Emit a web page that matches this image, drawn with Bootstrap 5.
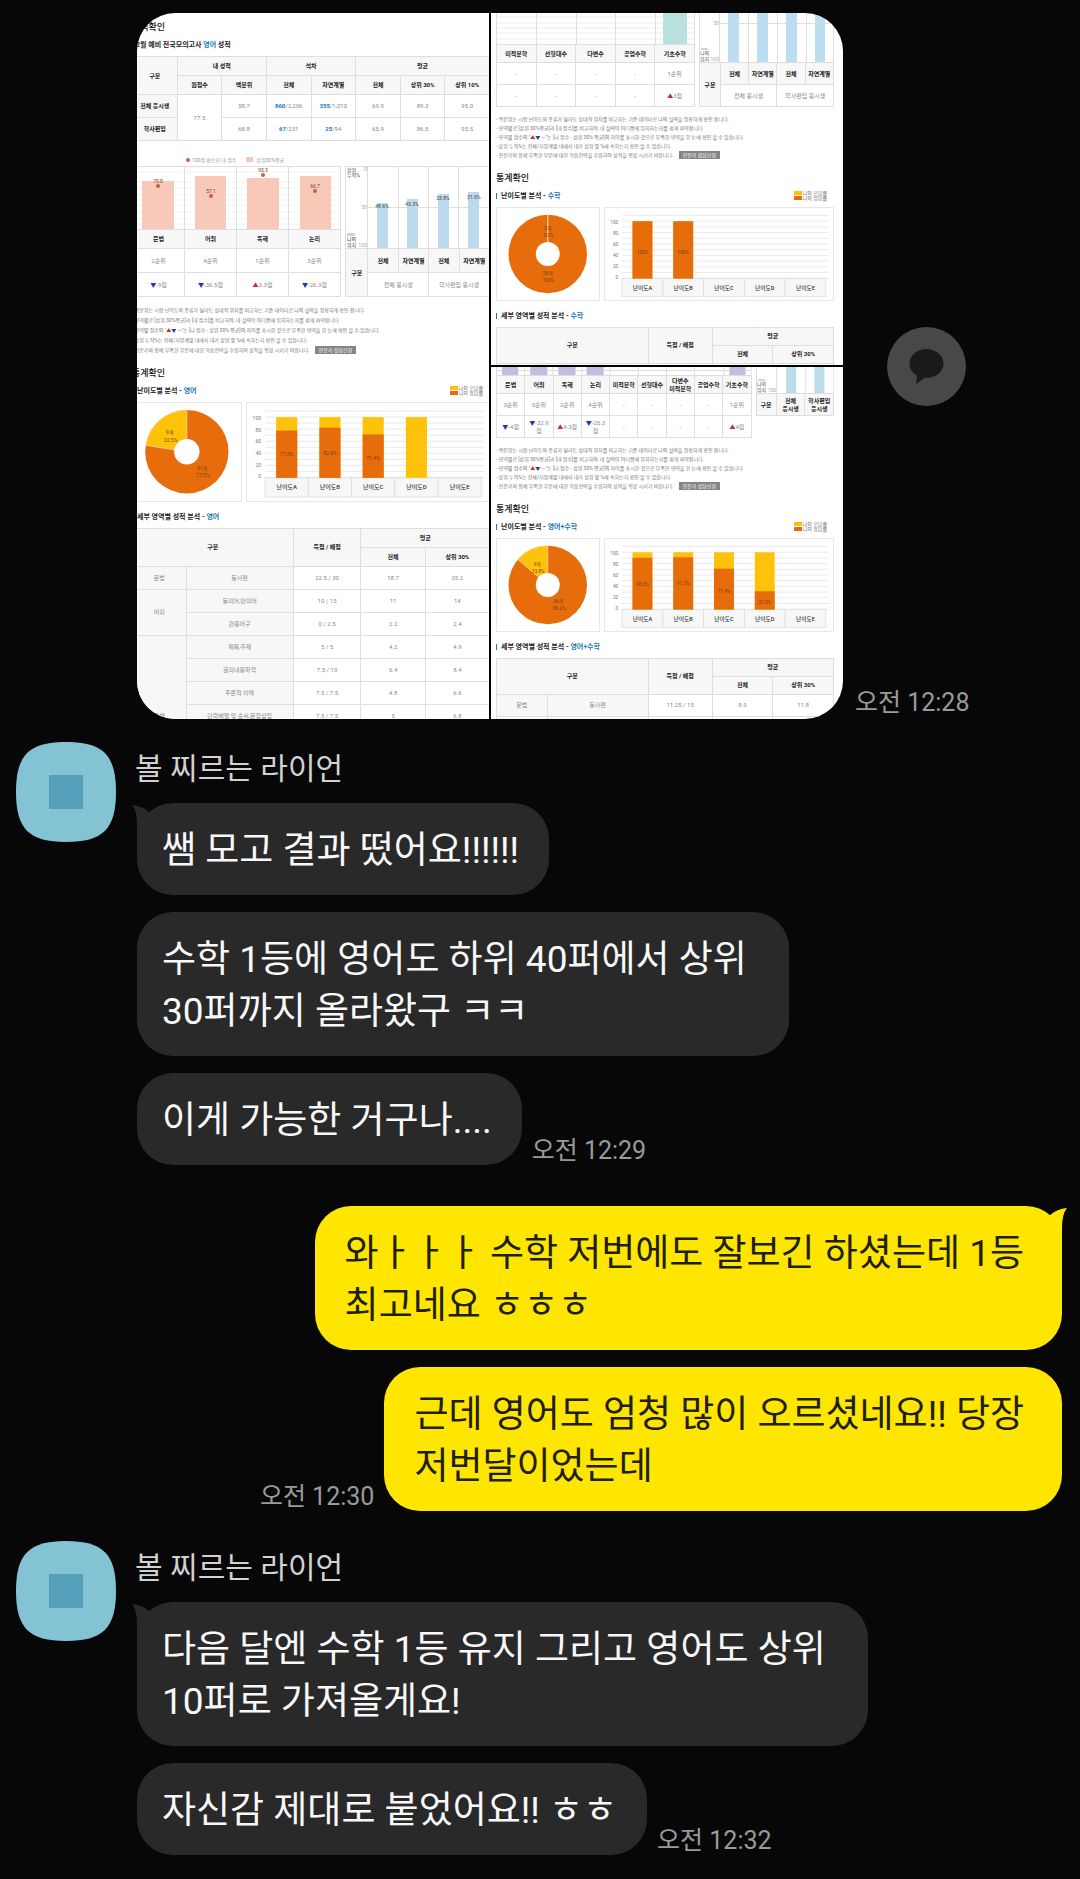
<!DOCTYPE html>
<html lang="ko">
<head>
<meta charset="utf-8">
<meta name="viewport" content="width=device-width, initial-scale=1">
<title>채팅</title>
<link rel="stylesheet" href="https://cdn.jsdelivr.net/npm/bootstrap@5.3.0/dist/css/bootstrap.min.css">
<style>
  body { background: #070707; font-family: Roboto, "Noto Sans CJK KR", sans-serif; }
  .chat { padding: 13px 18px 24px 16px; }
  .indent { margin-left: 121px; }

  /* messages */
  .group { gap: 21px; margin-top: 23px; }
  .group.next { margin-top: 30px; }
  .stack { gap: 17px; }
  .mine { margin-top: 41px; gap: 17px; }
  .avatar { width: 100px; height: 100px; }
  .sender { font-size: 30px; line-height: 34px; color: #d2d2d2; margin: 10px 0 17px -2px; font-weight: 400; }
  .bubble { position: relative; background: #292929; color: #f8f8f8; border-radius: 36px; padding: 22px 30px 18px 25px; font-size: 37px; line-height: 52px; margin: 0; }
  .bubble.wrapped { padding-right: 42px; }
  .mine .bubble { background: #ffe600; color: #211e08; padding-left: 30px; padding-right: 38px; }
  .tail { position: absolute; left: -6px; top: 0; width: 36px; height: 36px; fill: #292929; }
  .mine .tail { left: auto; right: -6px; fill: #ffe600; }
  .stamp { font-size: 25px; line-height: 28px; color: #9a9a9a; white-space: nowrap; }
  .gap-stamp { gap: 10px; }

  /* photo collage */
  .collage { flex: 0 1 706px; aspect-ratio: 1; display: grid; grid-template: 1fr 1fr / 1fr 1fr; gap: 2px; border-radius: 38px; overflow: hidden; background: #000; }
  .tile { background: #fff; overflow: hidden; min-height: 0; min-width: 0; color: #222; }
  .tile-tall { grid-row: 1 / 3; }
  .side { padding: 30px 0 2px 12px; }
  .share { width: 79px; height: 79px; border-radius: 50%; border: 0; padding: 0; background: #484848; margin-left: 32px; }

  /* score report pages */
  .sheet { margin: 0 9px 0 5px; font-size: 6px; line-height: 8px; }
  .tile-tall .sheet { margin: 8px -1px 0 -5px; }
  .sheet h2 { font-size: 9px; line-height: 12px; font-weight: 500; margin: 12px 0 7px; color: #111; }
  .tile-tall .sheet h2:first-child { margin-top: 0; }
  .sheet h3 { font-size: 7px; line-height: 10px; font-weight: 700; margin: 0; color: #222; }
  .sheet h3 span { color: #1878b4; }
  .tick { padding-left: 5px; background: linear-gradient(#1878b4, #1878b4) 0 50% / 1px 6px no-repeat; }
  .sheet .sub { margin-bottom: 6px; }
  .sheet .sub-after { margin-top: 10px; }
  .rpt { width: 100%; table-layout: fixed; border-collapse: collapse; text-align: center; vertical-align: middle; color: #8a8a8a; }
  .rpt th, .rpt td { border: 1px solid #dedede; padding: 0; height: 22px; vertical-align: middle; }
  .rpt th { background: #f7f7f7; color: #222; font-weight: 700; }
  .rpt .h-row th { height: 18px; }
  .rpt .soft { background: #f7f7f7; color: #8a8a8a; font-weight: 400; }
  .tile-tall .rpt td, .tile-tall .rpt tbody th { height: 23px; }
  .tile-tall .rpt .h-row th { height: 19px; }
  .tile-tall .pair td, .tile-tall .pair tr:not(.h-row) th { height: 24px; }
  .rpt b { color: #1878c4; }
  .pair { gap: 4px; }
  .pair svg, .stats svg { display: block; width: 100%; height: auto; }
  .w-main { flex: 209 209 0; min-width: 0; }
  .w-side { flex: 145 145 0; min-width: 0; }
  .tile-b .w-main { flex-grow: 199; }
  .tile-b .w-side { flex-grow: 135; }
  .tile-c .w-main { flex-grow: 254; }
  .tile-c .w-side { flex-grow: 78; }
  .up { color: #c0303c; }
  .dn { color: #2038b0; }
  .notes { list-style: none; margin: 8px 0 0; padding: 0; font-size: 5px; line-height: 9px; color: #777; white-space: nowrap; }
  .tile-tall .notes { line-height: 10px; }
  .notes button { font-size: 5px; line-height: 8px; background: #858585; color: #fff; border: 0; padding: 0 4px; margin-left: 4px; }
  .legend { font-size: 5px; line-height: 10px; color: #999; gap: 10px; margin: 14px 0 1px 54px; }
  .key { display: inline-block; width: 7px; height: 5px; background: #f8c8b8; margin-right: 3px; }
  .key.pt { width: 4px; height: 4px; border-radius: 50%; background: #d0603c; margin-right: 2px; }
  .rate { font-size: 5px; line-height: 5px; color: #777; padding-right: 7px; }
  .rate i { display: inline-block; width: 8px; height: 4px; margin-right: 1px; background: #ffc20a; vertical-align: top; }
  .rate i.ok { background: #e66c0c; }
  .stats { gap: 4px; }
  .stats > div { border: 1px solid #e6e6e6; min-width: 0; }
  .box-pie { flex: 108 108 0; }
  .box-bar { flex: 243 243 0; }
  svg text { font-family: Roboto, "Noto Sans CJK KR", sans-serif; }
</style>
</head>
<body>
<main class="chat d-flex flex-column">

  <section class="indent d-flex">
    <div class="collage">

      <article class="tile tile-tall">
        <div class="sheet">
          <h2>성적확인</h2>
          <h3 class="sub">12월 예비 전국모의고사 <span>영어</span> 성적</h3>
          <table class="rpt">
            <thead>
              <tr class="h-row"><th rowspan="2">구분</th><th colspan="2">내 성적</th><th colspan="2">석차</th><th colspan="3">평균</th></tr>
              <tr class="h-row"><th>원점수</th><th>백분위</th><th>전체</th><th>자연계열</th><th>전체</th><th>상위 30%</th><th>상위 10%</th></tr>
            </thead>
            <tbody>
              <tr><th>전체 응시생</th><td rowspan="2">77.5</td><td>58.7</td><td><b>860</b>/2,206</td><td><b>355</b>/1,010</td><td>69.9</td><td>89.3</td><td>95.0</td></tr>
              <tr><th>학사편입</th><td>68.8</td><td><b>67</b>/231</td><td><b>25</b>/94</td><td>65.9</td><td>86.5</td><td>93.5</td></tr>
            </tbody>
          </table>
          <div class="legend d-flex">
            <span><i class="key pt"></i>100점 환산한 내 점수</span><span><i class="key"></i>상위30%평균</span>
          </div>
          <div class="pair d-flex">
            <div class="w-main">
              <svg viewBox="0 0 209 63" role="img" aria-label="영역별 점수">
                <path d="M0 6H209M0 16H209M0 22H209M0 28H209M0 34H209M0 40H209M0 46H209M0 52H209M0 58H209" stroke="#eee" stroke-width=".7"/>
                <path d="M0 .5H208.500V63M52.500 0V63M104.500 0V63M156.500 0V63" fill="none" stroke="#dedede"/>
                <path d="M10 15h32v48h-32zM63 10h31v53h-31zM115 12h32v51h-32zM168 10h31v53h-31z" fill="#f8c8b8"/>
                <g fill="#c8603c"><circle cx="26" cy="20" r="2"/><circle cx="79" cy="30" r="2"/><circle cx="131" cy="9" r="2"/><circle cx="183" cy="25" r="2"/></g>
                <g font-size="5" fill="#7a3a2a" text-anchor="middle"><text x="26" y="17">75.0</text><text x="79" y="27">57.1</text><text x="131" y="6">93.3</text><text x="183" y="22">66.7</text></g>
              </svg>
              <table class="rpt">
                <tr class="h-row"><th>문법</th><th>어휘</th><th>독해</th><th>논리</th></tr>
                <tr><td>2순위</td><td>4순위</td><td>1순위</td><td>3순위</td></tr>
                <tr><td><span class="dn">▼</span>-9점</td><td><span class="dn">▼</span>-36.5점</td><td><span class="up">▲</span>3.3점</td><td><span class="dn">▼</span>-26.3점</td></tr>
              </table>
            </div>
            <div class="w-side">
              <svg viewBox="0 0 145 82" role="img" aria-label="상위 누적 비율">
                <path d="M.5 82V.5H145M22.500 0V82M53.500 0V82M83.500 0V82M113.500 0V82M22 41.500H145" fill="none" stroke="#dedede"/>
                <path d="M32 37h11v45h-11zM62 33h11v49h-11zM93 28h11v54h-11zM123 26h11v56h-11zM2 67h8v3h-8z" fill="#bcdaec"/>
                <g font-size="5" fill="#444"><g text-anchor="middle"><text x="37" y="42">48.6%</text><text x="67" y="40">43.3%</text><text x="98" y="34">33.8%</text><text x="129" y="33">31.0%</text></g><text x="2" y="6">상위</text><text x="2" y="11">누적%</text><text x="2" y="75">나의</text><text x="2" y="81">위치</text></g>
                <g font-size="5" fill="#aaa" text-anchor="end"><text x="22" y="5">0</text><text x="22" y="43">50</text><text x="22" y="81">100</text></g>
              </svg>
              <table class="rpt">
                <colgroup><col style="width:15.500%"><col span="4"></colgroup>
                <tr><th rowspan="2">구분</th><th>전체</th><th>자연계열</th><th>전체</th><th>자연계열</th></tr>
                <tr><td colspan="2">전체 응시생</td><td colspan="2">학사편입 응시생</td></tr>
              </table>
            </div>
          </div>
          <ul class="notes">
            <li>- 백분위는 시험 난이도와 종류가 달라도 상대적 위치를 비교하는 기준 데이터로 나의 실력을 정확하게 확인 합니다.</li>
            <li>- 영역별로 [상위 30%평균]과 [내 점수]를 비교하여, 내 실력이 어디쯤에 위치하는지를 쉽게 파악합니다.</li>
            <li>- 영역별 점수의 "<span class="up">▲</span><span class="dn">▼</span> —"는 [나 점수 - 상위 30% 평균]의 차이를 표시한 것으로 부족한 영역을 한 눈에 확인 할 수 있습니다.</li>
            <li>- 상위 누적%는 전체/지망계열 내에서 내가 상위 몇 %에 속하는지 확인 할 수 있습니다.</li>
            <li>- 전문가와 함께 부족한 부분에 대한 학습전략을 수립하여 성적을 향상 시키기 바랍니다. <button type="button">전문가 상담신청</button></li>
          </ul>
          <h2>통계확인</h2>
          <div class="sub d-flex justify-content-between"><h3 class="tick">난이도별 분석 - <span>영어</span></h3><div class="rate"><div><i></i>나의 오답률</div><div><i class="ok"></i>나의 정답률</div></div></div>
          <div class="stats d-flex" data-wrong="22.5" data-labels="9개 22.5%|31개 77.5%" data-bars="77.8,82.6,71.4,0"></div>
          <h3 class="tick sub sub-after">세부 영역별 성적 분석 - <span>영어</span></h3>
          <table class="rpt">
            <colgroup><col style="width:15%"><col style="width:30%"><col style="width:19%"><col style="width:18%"><col></colgroup>
            <thead>
              <tr class="h-row"><th colspan="2" rowspan="2">구분</th><th rowspan="2">득점 / 배점</th><th colspan="2">평균</th></tr>
              <tr class="h-row"><th>전체</th><th>상위 30%</th></tr>
            </thead>
            <tbody>
              <tr><td class="soft">문법</td><td class="soft">동사편</td><td>22.5 / 30</td><td>18.7</td><td>25.2</td></tr>
              <tr><td class="soft" rowspan="2">어휘</td><td class="soft">동의어,반의어</td><td>10 / 15</td><td>11</td><td>14</td></tr>
              <tr><td class="soft">관용어구</td><td>0 / 2.5</td><td>2.2</td><td>2.4</td></tr>
              <tr><td class="soft" rowspan="7">독해</td><td class="soft">제목,주제</td><td>5 / 5</td><td>4.2</td><td>4.9</td></tr>
              <tr><td class="soft">글의내용파악</td><td>7.5 / 10</td><td>6.4</td><td>8.4</td></tr>
              <tr><td class="soft">추론적 이해</td><td>7.5 / 7.5</td><td>4.8</td><td>6.6</td></tr>
              <tr><td class="soft">단락배열 및 순서,문장삽입</td><td>7.5 / 7.5</td><td>5</td><td>6.8</td></tr>
              <tr><td class="soft"></td><td></td><td></td><td></td></tr>
              <tr><td class="soft"></td><td></td><td></td><td></td></tr>
              <tr><td class="soft"></td><td></td><td></td><td></td></tr>
            </tbody>
          </table>
        </div>
      </article>

      <article class="tile tile-b">
        <div class="sheet">
          <div class="pair d-flex">
            <div class="w-main">
              <svg viewBox="0 0 199 31" role="img" aria-label="영역별 점수">
                <path d="M0 4H199M0 10H199M0 15H199M0 20H199M0 26H199" stroke="#e6e6e6" stroke-width=".8"/>
                <path d="M.5 0V31M40.500 0V31M80.500 0V31M119.500 0V31M159.500 0V31M198.500 0V31" stroke="#dedede"/>
                <path d="M167 0h24v31h-24z" fill="#b8e0dc"/>
              </svg>
              <table class="rpt">
                <tr class="h-row"><th>미적분학</th><th>선형대수</th><th>다변수</th><th>공업수학</th><th>기초수학</th></tr>
                <tr><td>-</td><td>-</td><td>-</td><td>-</td><td>1순위</td></tr>
                <tr><td>-</td><td>-</td><td>-</td><td>-</td><td><span class="up">▲</span>3점</td></tr>
              </table>
            </div>
            <div class="w-side">
              <svg viewBox="0 0 135 49" role="img" aria-label="상위 누적 비율">
                <path d="M.5 0V49M20.500 0V49M49.500 0V49M78.500 0V49M107.500 0V49M134.500 0V49M20 10.500H135" stroke="#dedede"/>
                <path d="M29 0h11v49h-11zM58 0h11v49h-11zM87 0h11v49h-11zM116 0h10v49h-10zM2 35h7v2h-7z" fill="#bcdcf0"/>
                <g font-size="5" fill="#555"><text x="1" y="42">나의</text><text x="1" y="48">위치</text></g>
                <g font-size="5" fill="#aaa" text-anchor="end"><text x="20" y="12">50</text><text x="20" y="48">100</text></g>
              </svg>
              <table class="rpt">
                <colgroup><col style="width:15.500%"><col span="4"></colgroup>
                <tr><th rowspan="2">구분</th><th>전체</th><th>자연계열</th><th>전체</th><th>자연계열</th></tr>
                <tr><td colspan="2">전체 응시생</td><td colspan="2">학사편입 응시생</td></tr>
              </table>
            </div>
          </div>
          <ul class="notes">
            <li>- 백분위는 시험 난이도와 종류가 달라도 상대적 위치를 비교하는 기준 데이터로 나의 실력을 정확하게 확인 합니다.</li>
            <li>- 영역별로 [상위 30%평균]과 [내 점수]를 비교하여, 내 실력이 어디쯤에 위치하는지를 쉽게 파악합니다.</li>
            <li>- 영역별 점수의 "<span class="up">▲</span><span class="dn">▼</span> —"는 [나 점수 - 상위 30% 평균]의 차이를 표시한 것으로 부족한 영역을 한 눈에 확인 할 수 있습니다.</li>
            <li>- 상위 누적%는 전체/지망계열 내에서 내가 상위 몇 %에 속하는지 확인 할 수 있습니다.</li>
            <li>- 전문가와 함께 부족한 부분에 대한 학습전략을 수립하여 성적을 향상 시키기 바랍니다. <button type="button">전문가 상담신청</button></li>
          </ul>
          <h2>통계확인</h2>
          <div class="sub d-flex justify-content-between"><h3 class="tick">난이도별 분석 - <span>수학</span></h3><div class="rate"><div><i></i>나의 오답률</div><div><i class="ok"></i>나의 정답률</div></div></div>
          <div class="stats d-flex" data-wrong="0" data-labels="0개 0.0%|28개 100%" data-bars="100,100"></div>
          <h3 class="tick sub sub-after">세부 영역별 성적 분석 - <span>수학</span></h3>
          <table class="rpt">
            <colgroup><col style="width:15%"><col style="width:30%"><col style="width:19%"><col style="width:18%"><col></colgroup>
            <tr class="h-row"><th colspan="2" rowspan="2">구분</th><th rowspan="2">득점 / 배점</th><th colspan="2">평균</th></tr>
            <tr class="h-row"><th>전체</th><th>상위 30%</th></tr>
            <tr><td class="soft"></td><td class="soft"></td><td></td><td></td><td></td></tr>
          </table>
        </div>
      </article>

      <article class="tile tile-c">
        <div class="sheet">
          <div class="pair d-flex align-items-start">
            <div class="w-main">
              <svg viewBox="0 0 254 8" role="img" aria-label="영역별 점수">
                <path d="M.5 0V8M28.500 0V8M56.500 0V8M85.500 0V8M113.500 0V8M141.500 0V8M169.500 0V8M197.500 0V8M226.500 0V8M253.500 0V8M0 3.500H254" stroke="#dedede"/>
                <path d="M6 0h16v8h-16zM34 0h17v8h-17zM62 0h17v8h-17zM90 0h17v8h-17zM232 0h16v8h-16z" fill="#c5bbdf"/>
              </svg>
              <table class="rpt">
                <tr class="h-row"><th>문법</th><th>어휘</th><th>독해</th><th>논리</th><th>미적분학</th><th>선형대수</th><th>다변수<br>미적분학</th><th>공업수학</th><th>기초수학</th></tr>
                <tr><td>3순위</td><td>5순위</td><td>2순위</td><td>4순위</td><td>-</td><td>-</td><td>-</td><td>-</td><td>1순위</td></tr>
                <tr><td><span class="dn">▼</span>-4점</td><td><span class="dn">▼</span>-32.9<br>점</td><td><span class="up">▲</span>4.3점</td><td><span class="dn">▼</span>-25.3<br>점</td><td>-</td><td>-</td><td>-</td><td>-</td><td><span class="up">▲</span>4점</td></tr>
              </table>
            </div>
            <div class="w-side">
              <svg viewBox="0 0 78 26" role="img" aria-label="상위 누적 비율">
                <path d="M.5 0V26M20.500 0V26M49.500 0V26M77.500 0V26" stroke="#dedede"/>
                <path d="M30 0h10v26h-10zM58 0h10v26h-10zM2 12h7v2h-7z" fill="#bcdcec"/>
                <g font-size="5" fill="#555"><text x="1" y="19">나의</text><text x="1" y="25">위치</text><text x="20" y="25" text-anchor="end" fill="#aaa">100</text></g>
              </svg>
              <table class="rpt">
                <colgroup><col style="width:26%"><col span="2"></colgroup>
                <tr><th>구분</th><th>전체<br>응시생</th><th>학사편입<br>응시생</th></tr>
              </table>
            </div>
          </div>
          <ul class="notes">
            <li>- 백분위는 시험 난이도와 종류가 달라도 상대적 위치를 비교하는 기준 데이터로 나의 실력을 정확하게 확인 합니다.</li>
            <li>- 영역별로 [상위 30%평균]과 [내 점수]를 비교하여, 내 실력이 어디쯤에 위치하는지를 쉽게 파악합니다.</li>
            <li>- 영역별 점수의 "<span class="up">▲</span><span class="dn">▼</span> —"는 [나 점수 - 상위 30% 평균]의 차이를 표시한 것으로 부족한 영역을 한 눈에 확인 할 수 있습니다.</li>
            <li>- 상위 누적%는 전체/지망계열 내에서 내가 상위 몇 %에 속하는지 확인 할 수 있습니다.</li>
            <li>- 전문가와 함께 부족한 부분에 대한 학습전략을 수립하여 성적을 향상 시키기 바랍니다. <button type="button">전문가 상담신청</button></li>
          </ul>
          <h2>통계확인</h2>
          <div class="sub d-flex justify-content-between"><h3 class="tick">난이도별 분석 - <span>영어+수학</span></h3><div class="rate"><div><i></i>나의 오답률</div><div><i class="ok"></i>나의 정답률</div></div></div>
          <div class="stats d-flex" data-wrong="13.8" data-labels="9개 13.8%|56개 86.2%" data-bars="90.5,91.2,71.4,32.0"></div>
          <h3 class="tick sub sub-after">세부 영역별 성적 분석 - <span>영어+수학</span></h3>
          <table class="rpt">
            <colgroup><col style="width:15%"><col style="width:30%"><col style="width:19%"><col style="width:18%"><col></colgroup>
            <tr class="h-row"><th colspan="2" rowspan="2">구분</th><th rowspan="2">득점 / 배점</th><th colspan="2">평균</th></tr>
            <tr class="h-row"><th>전체</th><th>상위 30%</th></tr>
            <tr><td class="soft">문법</td><td class="soft">동사편</td><td>11.25 / 15</td><td>8.9</td><td>11.8</td></tr>
            <tr><td class="soft"></td><td class="soft"></td><td></td><td></td><td></td></tr>
          </table>
        </div>
      </article>
    </div>

    <div class="side d-flex flex-column">
      <button type="button" class="share my-auto" aria-label="공유">
        <svg width="79" height="79" viewBox="0 0 79 79"><path d="M39.500 22C30 22 22.500 28.500 22.500 36.500c0 5 3 9.500 7.500 12.200L29 57l8.500-6.200c.7.100 1.400.1 2 .1 9.500 0 17-6.400 17-14.400S49 22 39.500 22z" fill="#1a1a1a"/></svg>
      </button>
      <time class="stamp">오전 12:28</time>
    </div>
  </section>

  <section class="group d-flex align-items-start">
    <svg class="avatar flex-shrink-0" viewBox="0 0 100 100" role="img" aria-label="프로필"><path d="M50 0C87 0 100 13 100 50S87 100 50 100 0 87 0 50 13 0 50 0z" fill="#83c3d4"/><path d="M33 33h34v34h-34z" fill="#549fb9"/></svg>
    <div>
      <h1 class="sender">볼 찌르는 라이언</h1>
      <div class="stack d-flex flex-column align-items-start">
        <p class="bubble"><svg class="tail" viewBox="-6 0 36 36"><path d="M-5 2Q5 3 12 9L20 20 0 36V22Q0 8-5 2z"/></svg>쌤 모고 결과 떴어요!!!!!!</p>
        <p class="bubble wrapped">수학 1등에 영어도 하위 40퍼에서 상위<br>30퍼까지 올라왔구 ㅋㅋ</p>
        <div class="d-flex align-items-end gap-stamp"><p class="bubble">이게 가능한 거구나....</p><time class="stamp">오전 12:29</time></div>
      </div>
    </div>
  </section>

  <section class="mine d-flex flex-column align-items-end">
    <p class="bubble"><svg class="tail" viewBox="-30 0 36 36"><path d="M5 2Q-5 3-12 9L-20 20 0 36V22Q0 8 5 2z"/></svg>와ㅏㅏㅏ 수학 저번에도 잘보긴 하셨는데 1등<br>최고네요 ㅎㅎㅎ</p>
    <div class="d-flex align-items-end gap-stamp"><time class="stamp">오전 12:30</time><p class="bubble">근데 영어도 엄청 많이 오르셨네요!! 당장<br>저번달이었는데</p></div>
  </section>

  <section class="group next d-flex align-items-start">
    <svg class="avatar flex-shrink-0" viewBox="0 0 100 100" role="img" aria-label="프로필"><path d="M50 0C87 0 100 13 100 50S87 100 50 100 0 87 0 50 13 0 50 0z" fill="#83c3d4"/><path d="M33 33h34v34h-34z" fill="#549fb9"/></svg>
    <div>
      <h1 class="sender">볼 찌르는 라이언</h1>
      <div class="stack d-flex flex-column align-items-start">
        <p class="bubble wrapped"><svg class="tail" viewBox="-6 0 36 36"><path d="M-5 2Q5 3 12 9L20 20 0 36V22Q0 8-5 2z"/></svg>다음 달엔 수학 1등 유지 그리고 영어도 상위<br>10퍼로 가져올게요!</p>
        <div class="d-flex align-items-end gap-stamp"><p class="bubble">자신감 제대로 붙었어요!! ㅎㅎ</p><time class="stamp">오전 12:32</time></div>
      </div>
    </div>
  </section>
</main>

<script>
  // Donut and stacked bars of each report, drawn from the data attributes
  document.querySelectorAll('.stats').forEach(function (el) {
    var wrong = +el.dataset.wrong;
    var labels = el.dataset.labels.split('|').map(function (s) { return s.split(' '); });
    var a = -wrong / 100 * 2 * Math.PI, r = 41;
    var x = 53 + r * Math.sin(a), y = 48 - r * Math.cos(a);
    var right = wrong > 20 ? [36, 31, 68, 66] : wrong > 0 ? [42, 28, 64, 67] : [53, 23, 53, 70];
    var pie = '<svg viewBox="0 0 106 96" role="img" aria-label="정답률"><circle cx="53" cy="48" r="41" fill="#e66c0c"/>' +
      '<path d="M53 48V7A41 41 0 0 0 ' + x + ' ' + y + 'z" fill="#ffc20a" stroke="#fbd9a0" stroke-width=".8"/>' +
      '<circle cx="53" cy="48" r="12.500" fill="#fff"/><g font-size="5" fill="#7a4216" text-anchor="middle">' +
      labels.map(function (l, i) {
        return '<text x="' + right[i * 2] + '" y="' + right[i * 2 + 1] + '">' + l[0] + '</text>' +
               '<text x="' + (right[i * 2] + 1) + '" y="' + (right[i * 2 + 1] + 7) + '">' + l[1] + '</text>';
      }).join('') + '</g></svg>';
    var s = '<svg viewBox="0 0 241 96" role="img" aria-label="난이도별 정답률"><g stroke="#e4e4e4" stroke-width=".8">';
    for (var i = 0; i < 12; i++) s += '<path d="M18 ' + (8 + i * 6) + 'H236"/>';
    s += '</g><g font-size="5" fill="#777" text-anchor="end">';
    for (i = 0; i < 6; i++) s += '<text x="14" y="' + (17 + i * 11.6) + '">' + (100 - i * 20) + '</text>';
    s += '</g>';
    var bars = el.dataset.bars.split(',');
    for (i = 0; i < 5; i++) {
      var bx = 18 + i * 43;
      s += '<rect x="' + bx + '" y="74.500" width="43" height="19" fill="#f7f7f7" stroke="#dcdcdc" stroke-width=".8"/>' +
        '<text x="' + (bx + 21.5) + '" y="86" font-size="6" font-weight="500" fill="#333" text-anchor="middle">난이도' + 'ABCDE'[i] + '</text>';
      if (i < bars.length) {
        var h = 60.5 * bars[i] / 100;
        s += '<rect x="' + (bx + 11) + '" y="14" width="21" height="60.500" fill="#ffc20a"/>' +
          '<rect x="' + (bx + 11) + '" y="' + (74.5 - h) + '" width="21" height="' + h + '" fill="#e66c0c"/>';
        if (h) s += '<text x="' + (bx + 21.5) + '" y="' + (Math.max(46, 74.5 - h / 2) + 2 + (h < 45 ? 2 : 0)) + '" font-size="5" fill="#7a4216" text-anchor="middle">' + bars[i] + '%</text>';
      }
    }
    el.innerHTML = '<div class="box-pie">' + pie + '</div><div class="box-bar">' + s + '</svg></div>';
  });
</script>
<script src="https://cdn.jsdelivr.net/npm/bootstrap@5.3.0/dist/js/bootstrap.bundle.min.js"></script>
</body>
</html>
